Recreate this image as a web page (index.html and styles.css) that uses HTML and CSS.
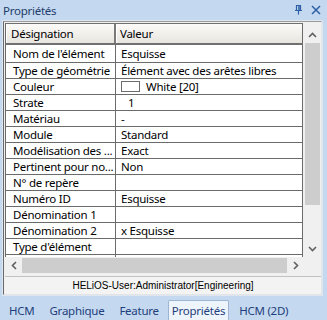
FILE: index.html
```html
<!DOCTYPE html>
<html lang="fr">
<head>
<meta charset="utf-8">
<link rel="stylesheet" href="styles.css">
</head>
<body>
<div class="title">
  <span class="name">Propriétés</span>
  <svg class="pin" width="9" height="10" viewBox="0 0 9 10"><path d="M2.5 0.5h4v5h-4z M1 5.5h7 M4.5 5.5v4" fill="none" stroke="#2d5fa6" stroke-width="1.2"/><path d="M5 1v4.5" stroke="#2d5fa6" stroke-width="1.5"/></svg>
  <svg class="close" width="10" height="10" viewBox="0 0 10 10"><path d="M1 1L9 9M9 1L1 9" stroke="#2d5fa6" stroke-width="1.5"/></svg>
</div>
<div class="panel">
  <div class="frame">
    <div class="gridarea">
      <div class="table">
        <div class="hdr"><div class="hc c1">Désignation</div><div class="hc c2">Valeur</div></div>
        <div class="row first"><div class="c1">Nom de l'élément</div><div class="c2">Esquisse</div></div>
        <div class="row"><div class="c1">Type de géométrie</div><div class="c2">Élément avec des arêtes libres</div></div>
        <div class="row"><div class="c1">Couleur</div><div class="c2"><span class="swatch"></span>White [20]</div></div>
        <div class="row"><div class="c1">Strate</div><div class="c2 indent">1</div></div>
        <div class="row"><div class="c1">Matériau</div><div class="c2">-</div></div>
        <div class="row"><div class="c1">Module</div><div class="c2">Standard</div></div>
        <div class="row"><div class="c1">Modélisation des ...</div><div class="c2">Exact</div></div>
        <div class="row"><div class="c1">Pertinent pour no...</div><div class="c2">Non</div></div>
        <div class="row"><div class="c1">N° de repère</div><div class="c2"></div></div>
        <div class="row"><div class="c1">Numéro ID</div><div class="c2">Esquisse</div></div>
        <div class="row"><div class="c1">Dénomination 1</div><div class="c2"></div></div>
        <div class="row"><div class="c1">Dénomination 2</div><div class="c2">x Esquisse</div></div>
        <div class="row"><div class="c1">Type d'élément</div><div class="c2"></div></div>
        <div class="row"><div class="c1"></div><div class="c2"></div></div>
      </div>
      <div class="vscroll">
        <div class="vbtn up"><svg width="9" height="6" viewBox="0 0 9 6"><path d="M1 5L4.5 1.5L8 5" fill="none" stroke="#606060" stroke-width="1.6"/></svg></div>
        <div class="vthumb"></div>
        <div class="vtrack"></div>
        <div class="vbtn down"><svg width="9" height="6" viewBox="0 0 9 6"><path d="M1 1L4.5 4.5L8 1" fill="none" stroke="#606060" stroke-width="1.6"/></svg></div>
      </div>
    </div>
    <div class="hbar">
      <div class="hscroll">
        <div class="hbtn"><svg width="6" height="9" viewBox="0 0 6 9"><path d="M5 1L1.5 4.5L5 8" fill="none" stroke="#606060" stroke-width="1.6"/></svg></div>
        <div class="hthumb"></div>
        <div class="hbtn"><svg width="6" height="9" viewBox="0 0 6 9"><path d="M1 1L4.5 4.5L1 8" fill="none" stroke="#606060" stroke-width="1.6"/></svg></div>
      </div>
      <div class="corner"></div>
    </div>
    <div class="status">HELiOS-User:Administrator[Engineering]</div>
  </div>
</div>
<div class="tabs">
  <div class="tab">HCM</div>
  <div class="tab">Graphique</div>
  <div class="tab">Feature</div>
  <div class="tab active">Propriétés</div>
  <div class="tab">HCM (2D)</div>
</div>
</body>
</html>
```
FILE: styles.css
```css
* { box-sizing: border-box; }
html, body { margin: 0; padding: 0; }
body {
  width: 327px;
  height: 320px;
  overflow: hidden;
  background: #c4d8ef;
  font-family: "Noto Sans", "DejaVu Sans", sans-serif;
  font-size: 11.5px;
  letter-spacing: -0.25px;
  color: #000;
}
.title {
  height: 20px;
  display: flex;
  align-items: center;
  padding: 0 6px 0 3px;
  color: #1d3d6b;
}
.title .name { flex: 1; }
.title .pin { margin-right: 8px; }
.panel {
  margin-left: 2px;
  width: 321px;
  height: 276px;
  border: 1px solid #dde6f1;
  background: #eef2f7;
}
.frame {
  width: 319px;
  height: 274px;
  border-left: 1px solid #6a6a6a;
  border-top: 1px solid #9a9a9a;
  border-right: 1px solid #e4e4e4;
  border-bottom: 1px solid #e4e4e4;
  background: #f0f0f0;
  display: flex;
  flex-direction: column;
}
.gridarea {
  height: 235px;
  display: flex;
  padding-left: 1px;
}
.table {
  width: 298px;
  margin-top: 1px;
  background: #fff;
  border-left: 1px solid #6b6b6b;
  border-right: 1px solid #6b6b6b;
  overflow: hidden;
}
.hdr {
  display: flex;
  height: 22px;
  border-top: 1px solid #707070;
  border-bottom: 2px solid #707070;
  background: linear-gradient(#fcfbf9, #e7e5de);
}
.hc {
  display: flex;
  align-items: center;
  border-left: 1px solid #fff;
}
.hc.c1 { width: 110px; padding-left: 4px; border-right: 2px solid #7a7a7a; }
.hc.c2 { flex: 1; padding-left: 3px; }
.row {
  display: flex;
  height: 16px;
  border-bottom: 1px solid #6b6b6b;
  line-height: 15px;
}
.row.first { height: 18px; line-height: 17px; }
.row .c1 {
  width: 110px;
  padding-left: 7px;
  border-right: 1px solid #6b6b6b;
  white-space: nowrap;
  overflow: hidden;
}
.row .c2 {
  flex: 1;
  padding-left: 5px;
  white-space: nowrap;
  overflow: hidden;
  display: flex;
  align-items: center;
}
.row .c2.indent { padding-left: 12px; }
.swatch {
  display: inline-block;
  width: 19px;
  height: 11px;
  border: 1px solid #6b6b6b;
  background: #fff;
  margin-right: 6px;
}
.vscroll {
  width: 17px;
  margin-left: 1px;
  margin-top: 1px;
  display: flex;
  flex-direction: column;
  background: #f0f0f0;
}
.vbtn {
  height: 20px;
  display: flex;
  align-items: center;
  justify-content: center;
}
.vbtn.up { padding-top: 4px; }
.vbtn.down { height: 17px; padding-top: 1px; }
.vthumb {
  height: 162px;
  margin: 0 1px;
  background: #cdcdcd;
}
.vtrack { flex: 1; }
.hbar {
  display: flex;
  height: 17px;
}
.hscroll {
  width: 299px;
  margin-left: 1px;
  display: flex;
  background: #f0f0f0;
}
.hbtn {
  width: 17px;
  display: flex;
  align-items: center;
  justify-content: center;
}
.hthumb {
  flex: 1;
  margin: 1px 0;
  background: #cdcdcd;
}
.corner { flex: 1; background: #f0f0f0; }
.status {
  margin: 2px 0 0 1px;
  flex: 1;
  border-top: 1px solid #c2c2c2;
  background: #f3f3f3;
  font-family: "Liberation Sans", Arial, sans-serif;
  font-size: 10px;
  letter-spacing: 0;
  display: flex;
  align-items: center;
  justify-content: center;
  padding-bottom: 1px;
}
.tabs {
  height: 24px;
  display: flex;
  align-items: flex-end;
  padding-left: 2px;
  color: #1f3f7c;
}
.tab {
  height: 20px;
  padding: 0 7px;
  display: flex;
  align-items: center;
  margin-right: 1px;
}
.tab.active {
  background: #eef4fb;
  border: 1px solid #9db5d3;
  border-bottom: none;
  border-radius: 2px 2px 0 0;
  padding: 0 3px;
  margin: 0 3px 0 1px;
}
```
